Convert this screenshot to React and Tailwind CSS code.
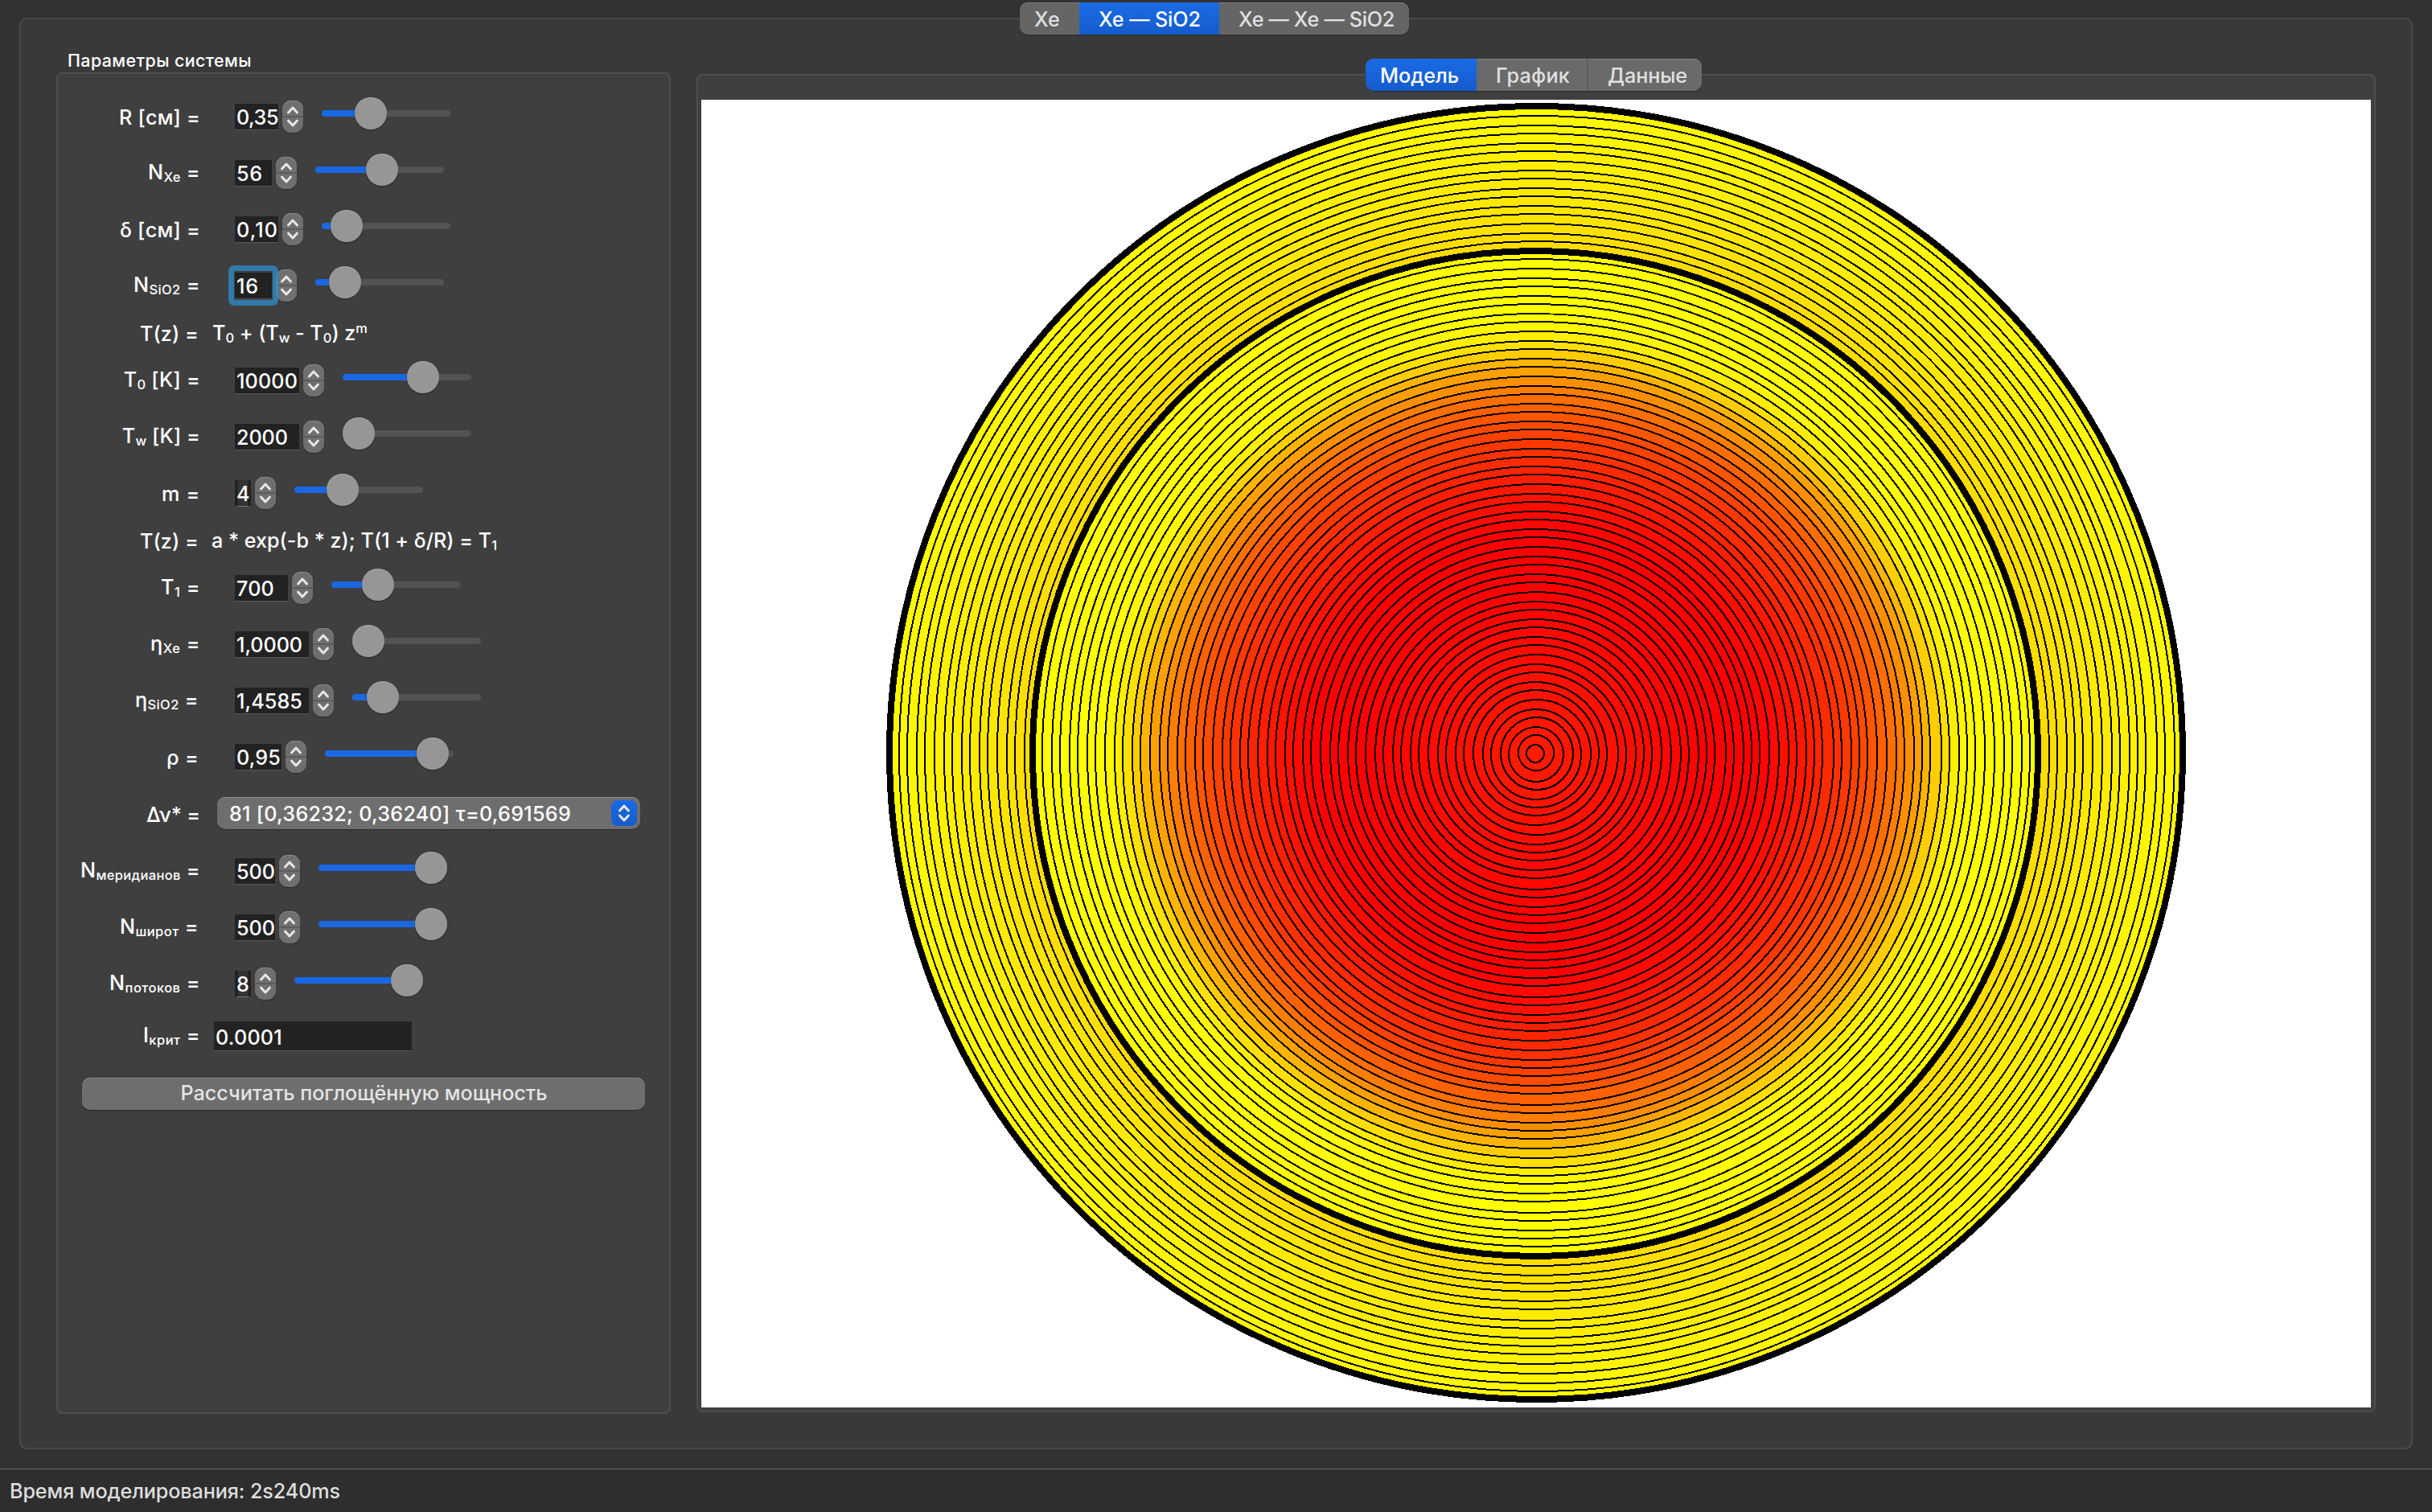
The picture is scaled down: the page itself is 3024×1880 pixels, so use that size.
import React, { useLayoutEffect, useRef } from "react";

/* Text run spaced out to a fixed advance width. */
function Fit({ w, className = "", children }) {
  const ref = useRef(null);
  useLayoutEffect(() => {
    const el = ref.current;
    el.style.letterSpacing = "0px";
    const natural = el.getBoundingClientRect().width;
    el.style.letterSpacing = `${(w - natural) / el.textContent.length}px`;
  }, [w]);
  return (
    <span ref={ref} className={`inline-block whitespace-pre ${className}`}>
      {children}
    </span>
  );
}

const Sub = ({ children }) => (
  <span className="relative top-[3px] text-[16.5px]">{children}</span>
);

function Chevrons({ gap, className = "" }) {
  return (
    <svg viewBox="0 0 26 40" className={`h-10 w-[26px] ${className}`} fill="none" stroke="#e6e6e6" strokeWidth="3" strokeLinecap="round" strokeLinejoin="round">
      <path d={`M7.5 ${17 - gap} L13 ${11 - gap} L18.5 ${17 - gap}`} />
      <path d={`M7.5 ${23 + gap} L13 ${29 + gap} L18.5 ${23 + gap}`} />
    </svg>
  );
}

function Stepper() {
  return (
    <div className="relative ml-[5px] h-10 w-[26px] overflow-hidden rounded-[11px] bg-[#6f6f6f] shadow-[inset_0_1px_0_#8a8a8a,0_1px_1px_#2c2c2c]">
      <div className="h-[19px]" />
      <div className="h-[2px] bg-[#5c5c5c]" />
      <Chevrons gap={2} className="absolute inset-0" />
    </div>
  );
}

function Slider({ pos }) {
  return (
    <div className="-mt-2 ml-[23px] flex h-10 w-40 items-center">
      <div className="h-2 rounded-l-full bg-[#1a68e4]" style={{ width: pos }} />
      <div className="h-10 w-10 shrink-0 rounded-full bg-[#969696] shadow-[inset_0_1px_0_#a6a6a6,0_1px_2px_#2a2a2a]" />
      <div className="h-2 flex-1 rounded-r-full bg-[#535353]" />
    </div>
  );
}

function Field({ value, width, textWidth, focused, narrow }) {
  const look = narrow
    ? "border-x-4 border-x-[#222222] bg-[#343434] border-b border-b-[#777777]"
    : "border-b border-b-[#585858] bg-[#222222]";
  return (
    <div className={`relative h-[33px] ${look}`} style={{ width }}>
      <div className={`h-full pl-[2px] pt-[1px] leading-[33px] ${narrow ? "-mx-1" : ""}`}>
        <Fit w={textWidth}>{value}</Fit>
      </div>
      {focused && (
        <div className="absolute -left-2 -top-[9px] z-10 h-[50px] w-[62px] rounded-[7px] border-[7px] border-[#2e8fcf]/75" />
      )}
    </div>
  );
}

function Row({ label, lw, low, height, end = 249, children }) {
  return (
    <div className="flex items-center" style={{ height }}>
      <div
        className={`flex shrink-0 justify-end leading-8 ${low ? "pt-[2px]" : "pt-[1px]"}`}
        style={{ width: end - 72, marginRight: 248 - end }}
      >
        <Fit w={lw}>{label}</Fit>
      </div>
      {children}
    </div>
  );
}

function ParamRow({ label, lw, low, end, value, fw, tw, pos, focused, narrow }) {
  return (
    <Row label={label} lw={lw} low={low} end={end} height={70}>
      <div className="ml-11 flex items-center">
        <Field value={value} width={fw} textWidth={tw} focused={focused} narrow={narrow} />
        <Stepper />
        <Slider pos={pos} />
      </div>
    </Row>
  );
}

/* ---- Layered cylinder model ---- */
const XE = 56;
const TOTAL = 72;
const PITCH = 402 / TOTAL;
const GREEN = {
  49: 255, 48: 247, 47: 238, 46: 224, 45: 205, 44: 180, 43: 160, 42: 143, 41: 125,
  40: 110, 39: 97, 38: 85, 37: 74, 36: 65, 35: 56, 34: 49, 33: 42, 32: 36, 31: 30,
  30: 24, 29: 19, 28: 14, 27: 9, 26: 4,
};
function layerColor(k) {
  let g;
  if (k > XE) g = 216 + Math.pow((k - XE) / 16, 0.8) * 34;
  else if (k >= 49) g = 255;
  else if (k >= 26) g = GREEN[k];
  else if (k >= 19) g = 0;
  else g = (28 * (19 - k)) / 18;
  return `rgb(255,${Math.round(g)},0)`;
}
const RINGS = Array.from({ length: TOTAL }, (_, i) => {
  const k = TOTAL - i;
  const r = PITCH * k;
  const d = Math.round(2 * r);
  return {
    k,
    r: d,
    cx: 2 * Math.round(955 - r) + d,
    cy: 2 * Math.round(468.49 - r) + d,
  };
});

function Model() {
  return (
    <svg viewBox="872 124 2076 1626" className="block h-[1626px] w-[2076px] bg-white" shapeRendering="crispEdges">
      {RINGS.map(({ k, r, cx, cy }) => (
        <circle key={k} cx={cx} cy={cy} r={r} fill={layerColor(k)} stroke="#000" strokeWidth={k === TOTAL || k === XE ? 8 : 2} />
      ))}
    </svg>
  );
}

function Seg({ width, tw, active, pad, children, className = "" }) {
  return (
    <div
      className={`h-10 shrink-0 pt-[1px] leading-10 ${active ? "bg-linear-to-b from-[#1a6be6] to-[#155ccc] text-white" : "text-[#e0e0e0]"} ${className}`}
      style={{ width, paddingLeft: pad }}
    >
      <Fit w={tw}>{children}</Fit>
    </div>
  );
}

export default function App() {
  return (
    <div className="flex h-[1880px] w-[3024px] flex-col overflow-hidden bg-[#323232] font-['Inter','Liberation_Sans',sans-serif] text-[25.2px] font-[450] text-white">
      <div className="ml-6 mt-[22px] h-[1780px] w-[2976px] shrink-0 rounded-[9px] border-2 border-[#4a4a4a] bg-[#393939]">
        <div className="-mt-[21px] ml-[1242px] flex h-10 w-[484px] overflow-hidden rounded-[10px] bg-[#656565] shadow-[inset_0_1px_0_#7c7c7c,0_1px_1px_#2a2a2a]">
          <Seg width={74} pad={18} tw={32}>Xe</Seg>
          <Seg width={174} pad={24} tw={127} active>Xe — SiO2</Seg>
          <Seg width={236} pad={24} tw={194}>Xe — Xe — SiO2</Seg>
        </div>

        <div className="flex">
          {/* parameters */}
          <div className="ml-[44px] mt-[14px] w-[764px]">
            <div className="h-[33px] pl-[14px] pt-[2px] text-[21.4px] leading-8">
              <Fit w={229}>Параметры системы</Fit>
            </div>
            <div className="h-[1668px] w-[764px] rounded-[8px] border-2 border-[#4e4e4e] bg-[#3f3f3f] pt-[18px]">
              <ParamRow label="R [см] =" lw={101} low value="0,35" fw={54} tw={52} pos={41} />
              <ParamRow label={<>N<Sub>Xe</Sub> =</>} lw={65} value="56" fw={46} tw={33} pos={63} />
              <ParamRow label="δ [см] =" lw={100} low value="0,10" fw={54} tw={52} pos={11} />
              <ParamRow label={<>N<Sub>SiO2</Sub> =</>} lw={83} value="16" fw={46} tw={28} pos={17} focused />
              <Row label="T(z) =" lw={73} low height={48} end={247}>
                <div className="ml-[16px] pt-[3px] leading-8">
                  <Fit w={193}>T<Sub>0</Sub> + (T<Sub>w</Sub> - T<Sub>0</Sub>) z<span className="relative -top-[9px] text-[16.5px]">m</span></Fit>
                </div>
              </Row>
              <ParamRow label={<>T<Sub>0</Sub> [K] =</>} lw={95} value="10000" fw={80} tw={76} pos={80} />
              <ParamRow label={<>T<Sub>w</Sub> [K] =</>} lw={97} value="2000" fw={80} tw={64} pos={0} />
              <ParamRow label="m =" lw={48} low value="4" fw={20} tw={17} pos={40} narrow />
              <Row label="T(z) =" lw={73} low height={48} end={247}>
                <div className="ml-[15px] pt-[3px] leading-8">
                  <Fit w={355}>a * exp(-b * z); T(1 + δ/R) = T<Sub>1</Sub></Fit>
                </div>
              </Row>
              <ParamRow label={<>T<Sub>1</Sub> =</>} lw={49} value="700" fw={66} tw={47} pos={38} />
              <ParamRow label={<>η<Sub>Xe</Sub> =</>} lw={62} value="1,0000" fw={92} tw={82} pos={0} />
              <ParamRow label={<>η<Sub>SiO2</Sub> =</>} lw={79} end={247} value="1,4585" fw={92} tw={82} pos={18} />
              <ParamRow label="ρ =" lw={40} end={247} low value="0,95" fw={58} tw={55} pos={114} />
              <Row label="Δν* =" lw={67} low height={72}>
                <div className="-mt-[2px] ml-[22px] flex h-10 w-[526px] items-center justify-between rounded-[10px] bg-[#6e6e6e] pl-[15px] pr-[4px] shadow-[inset_0_1px_0_#8a8a8a,0_1px_1px_#2a2a2a]">
                  <Fit w={425} className="pt-px leading-8">81 [0,36232; 0,36240] τ=0,691569</Fit>
                  <div className="flex h-8 w-8 items-center justify-center overflow-hidden rounded-[8px] bg-linear-to-b from-[#1a6be6] to-[#155ccc]">
                    <Chevrons gap={0} className="shrink-0" />
                  </div>
                </div>
              </Row>
              <ParamRow label={<>N<Sub>меридианов</Sub> =</>} lw={149} value="500" fw={50} tw={48} pos={120} />
              <ParamRow label={<>N<Sub>широт</Sub> =</>} lw={98} end={247} value="500" fw={50} tw={48} pos={120} />
              <ParamRow label={<>N<Sub>потоков</Sub> =</>} lw={113} value="8" fw={20} tw={17} pos={120} narrow />
              <Row label={<>I<Sub>крит</Sub> =</>} lw={71} height={60}>
                <div className="ml-[18px] mt-[1px] h-[37px] w-[246px] border-b border-b-[#585858] bg-[#222222] pl-[2px] pt-[2px] leading-9">
                  <Fit w={83}>0.0001</Fit>
                </div>
              </Row>
              <div className="ml-[30px] mt-[22px] flex h-10 w-[700px] justify-center rounded-[10px] bg-[#6e6e6e] pl-[1px] leading-[38px] text-[#e4e4e4] shadow-[inset_0_1px_0_#8a8a8a,0_1px_1px_#2a2a2a]">
                <Fit w={456}>Рассчитать поглощённую мощность</Fit>
              </div>
            </div>
          </div>

          {/* model view */}
          <div className="ml-[32px] mt-[49px] h-[1664px] w-[2088px] rounded-[8px] border-2 border-[#4e4e4e] bg-[#3f3f3f] px-1">
            <div className="-mt-[21px] mb-[11px] ml-[826px] flex h-10 w-[418px] overflow-hidden rounded-[10px] bg-[#6a6a6a] shadow-[inset_0_1px_0_#808080,0_1px_1px_#2a2a2a]">
              <Seg width={138} pad={18} tw={98} active>Модель</Seg>
              <Seg width={139} pad={24} tw={92} className="border-r-2 border-[#5c5c5c]">График</Seg>
              <Seg width={141} pad={24} tw={99}>Данные</Seg>
            </div>
            <Model />
          </div>
        </div>
      </div>

      <div className="mt-6 flex-1 border-t border-[#6a6a6a] bg-[#2e2e2e] pl-[12px] pt-[11px] leading-8 text-[#dedede]">
        <Fit w={411}>Время моделирования: 2s240ms</Fit>
      </div>
    </div>
  );
}
